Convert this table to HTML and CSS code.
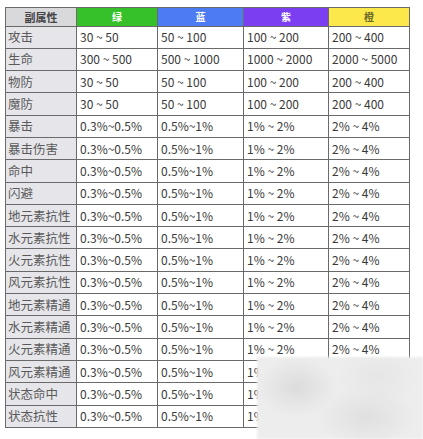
FILE: index.html
```html
<!DOCTYPE html>
<html lang="zh">
<head>
<meta charset="utf-8">
<link rel="stylesheet" href="styles.css">
</head>
<body>
<div class="page">
<table class="attr">
  <colgroup>
    <col class="c0"><col class="c1"><col class="c2"><col class="c3"><col class="c4">
  </colgroup>
  <thead>
    <tr>
      <th class="h-name">副属性</th>
      <th class="h-green">绿</th>
      <th class="h-blue">蓝</th>
      <th class="h-purple">紫</th>
      <th class="h-yellow">橙</th>
    </tr>
  </thead>
  <tbody>
    <tr><td>攻击</td><td>30 ~ 50</td><td>50 ~ 100</td><td>100 ~ 200</td><td>200 ~ 400</td></tr>
    <tr><td>生命</td><td>300 ~ 500</td><td>500 ~ 1000</td><td>1000 ~ 2000</td><td>2000 ~ 5000</td></tr>
    <tr><td>物防</td><td>30 ~ 50</td><td>50 ~ 100</td><td>100 ~ 200</td><td>200 ~ 400</td></tr>
    <tr><td>魔防</td><td>30 ~ 50</td><td>50 ~ 100</td><td>100 ~ 200</td><td>200 ~ 400</td></tr>
    <tr><td>暴击</td><td>0.3%~0.5%</td><td>0.5%~1%</td><td>1% ~ 2%</td><td>2% ~ 4%</td></tr>
    <tr><td>暴击伤害</td><td>0.3%~0.5%</td><td>0.5%~1%</td><td>1% ~ 2%</td><td>2% ~ 4%</td></tr>
    <tr><td>命中</td><td>0.3%~0.5%</td><td>0.5%~1%</td><td>1% ~ 2%</td><td>2% ~ 4%</td></tr>
    <tr><td>闪避</td><td>0.3%~0.5%</td><td>0.5%~1%</td><td>1% ~ 2%</td><td>2% ~ 4%</td></tr>
    <tr><td>地元素抗性</td><td>0.3%~0.5%</td><td>0.5%~1%</td><td>1% ~ 2%</td><td>2% ~ 4%</td></tr>
    <tr><td>水元素抗性</td><td>0.3%~0.5%</td><td>0.5%~1%</td><td>1% ~ 2%</td><td>2% ~ 4%</td></tr>
    <tr><td>火元素抗性</td><td>0.3%~0.5%</td><td>0.5%~1%</td><td>1% ~ 2%</td><td>2% ~ 4%</td></tr>
    <tr><td>风元素抗性</td><td>0.3%~0.5%</td><td>0.5%~1%</td><td>1% ~ 2%</td><td>2% ~ 4%</td></tr>
    <tr><td>地元素精通</td><td>0.3%~0.5%</td><td>0.5%~1%</td><td>1% ~ 2%</td><td>2% ~ 4%</td></tr>
    <tr><td>水元素精通</td><td>0.3%~0.5%</td><td>0.5%~1%</td><td>1% ~ 2%</td><td>2% ~ 4%</td></tr>
    <tr><td>火元素精通</td><td>0.3%~0.5%</td><td>0.5%~1%</td><td>1% ~ 2%</td><td>2% ~ 4%</td></tr>
    <tr><td>风元素精通</td><td>0.3%~0.5%</td><td>0.5%~1%</td><td>1% ~ 2%</td><td>2% ~ 4%</td></tr>
    <tr><td>状态命中</td><td>0.3%~0.5%</td><td>0.5%~1%</td><td>1% ~ 2%</td><td>2% ~ 4%</td></tr>
    <tr><td>状态抗性</td><td>0.3%~0.5%</td><td>0.5%~1%</td><td>1% ~ 2%</td><td>2% ~ 4%</td></tr>
  </tbody>
</table>
<div class="watermark"></div>
</div>
</body>
</html>
```

FILE: styles.css
```css
html, body {
  margin: 0;
  padding: 0;
  background: #ffffff;
}
.page {
  position: relative;
  width: 423px;
  height: 439px;
  overflow: hidden;
  padding: 7px 0 0 5px;
  box-sizing: border-box;
}
.attr {
  border-collapse: collapse;
  table-layout: fixed;
  width: 404px;
  font-family: "Noto Sans CJK SC", "Noto Sans", sans-serif;
  font-size: 12px;
  color: #3a3a3a;
}
.c0 { width: 71px; }
.c1 { width: 81px; }
.c2 { width: 86px; }
.c3 { width: 85px; }
.c4 { width: 81px; }
.attr th, .attr td {
  border: 1.5px solid #6a6a6a;
  padding: 0 0 0 3px;
  text-align: left;
  white-space: nowrap;
  overflow: hidden;
  line-height: 14px;
}
.attr thead tr { height: 18.5px; }
.attr tbody tr { height: 22.3px; }
.attr th {
  text-align: center;
  font-size: 10px;
  font-weight: bold;
  padding: 0;
  color: #fff;
}
.attr .h-name { background: #d9d9dc; color: #444; font-size: 11px; }
.attr .h-green { background: #36c12a; }
.attr .h-blue { background: #4d7cf2; }
.attr .h-purple { background: #7b3ef0; }
.attr .h-yellow { background: #fde84c; color: #6a6a2a; }
.attr td:first-child {
  background: #e6e6ea;
  color: #5a5a5a;
  padding-left: 2px;
  font-size: 12.5px;
}
.watermark {
  position: absolute;
  left: 257px;
  top: 357px;
  width: 166px;
  height: 82px;
  background:
    radial-gradient(ellipse 40px 30px at 40px 30px, rgba(218,218,218,0.9), rgba(218,218,218,0) 100%),
    radial-gradient(ellipse 50px 30px at 110px 60px, rgba(222,222,222,0.9), rgba(222,222,222,0) 100%),
    radial-gradient(ellipse 40px 30px at 120px 20px, rgba(228,228,228,0.8), rgba(228,228,228,0) 100%),
    #ededed;
  filter: blur(1px);
}
```
